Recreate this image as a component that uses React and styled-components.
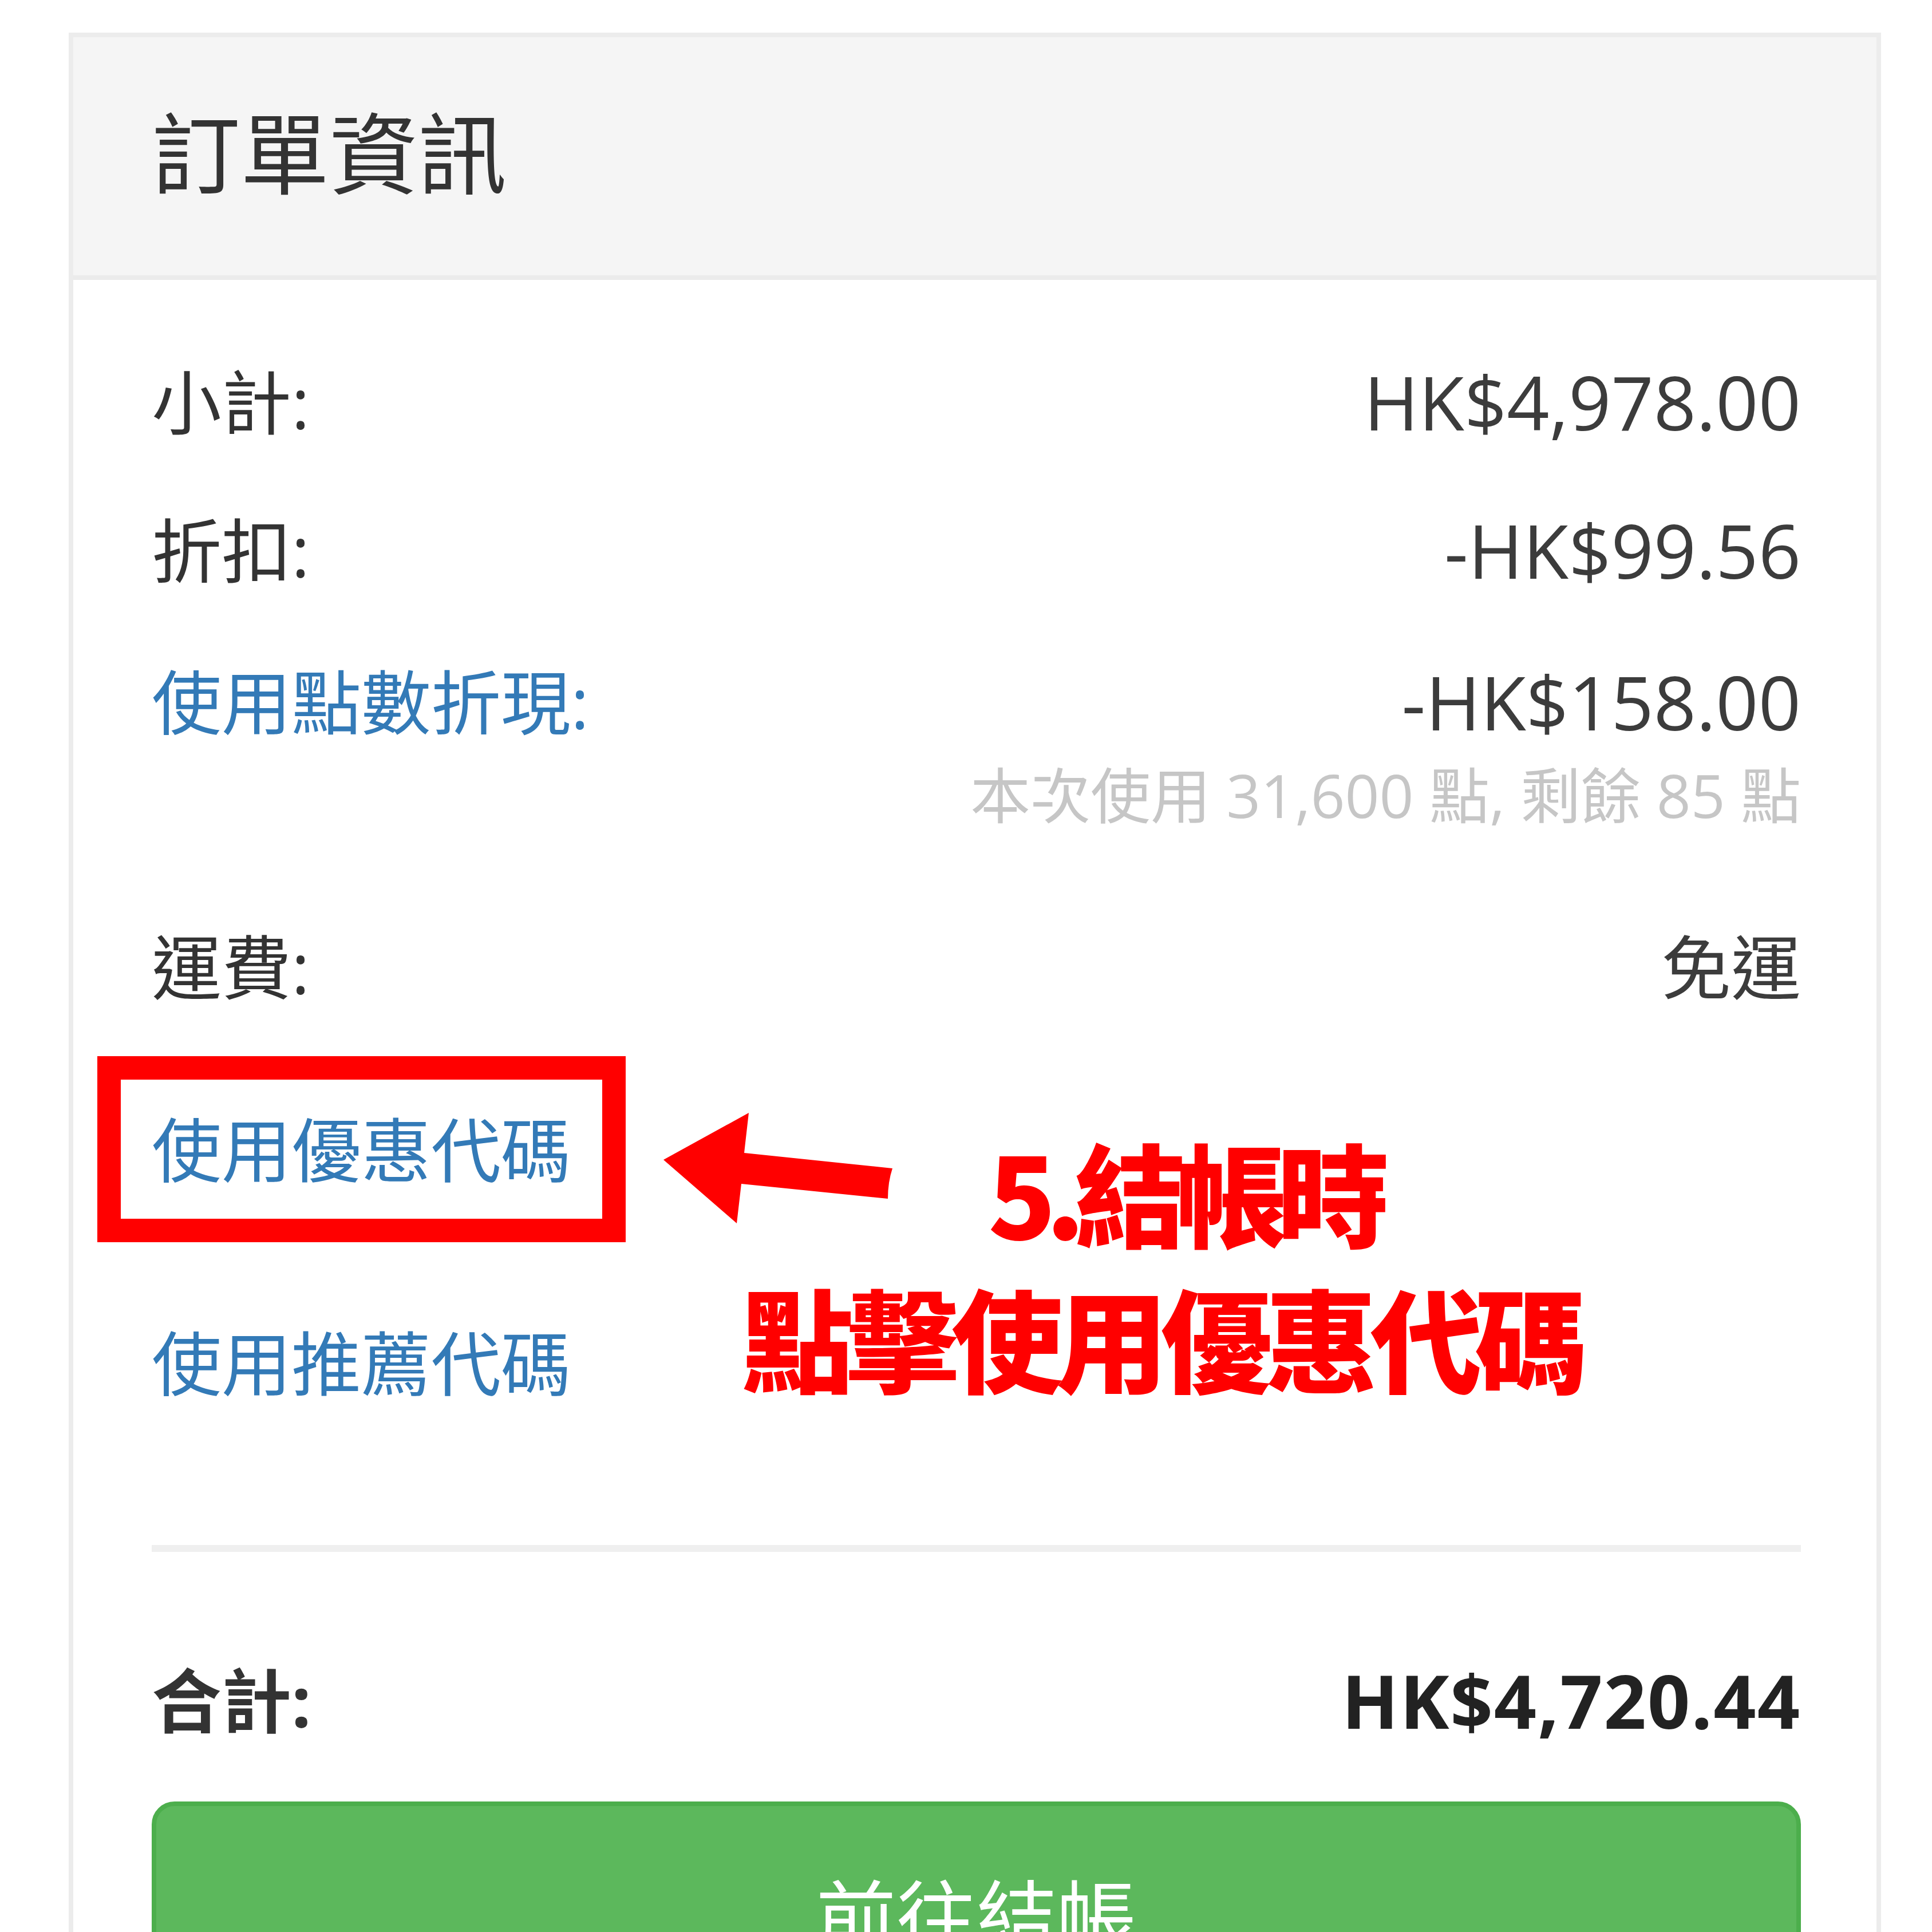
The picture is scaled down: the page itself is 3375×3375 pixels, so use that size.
import React from "react"
import styled, { createGlobalStyle } from "styled-components"

const GlobalStyle = createGlobalStyle`
  body {
    margin: 0;
    background: #fff;
  }
`

const FONT = `"Open Sans", "Noto Sans CJK TC", sans-serif`

export const Page = styled.div`
  position: relative;
  height: 3375px;
  overflow: hidden;
  padding: 57px 0 0 120px;
  box-sizing: border-box;
  font-family: ${FONT};
`

export const Card = styled.div`
  width: 3166px;
  box-sizing: border-box;
  border: 8px solid #ececec;
  border-bottom: none;
`

export const Header = styled.div`
  height: 424px;
  box-sizing: border-box;
  display: flex;
  align-items: center;
  padding: 0 0 28px 137px;
  background: #f5f5f5;
  border-bottom: 8px solid #ebebeb;
`

export const Title = styled.h3`
  margin: 0;
  font-size: 155px;
  font-weight: 400;
  color: #333;
  font-family: "Noto Sans CJK TC", sans-serif;
`

export const Body = styled.div`
  padding: 133px 132px 0 137px;
`

export const Row = styled.div`
  display: flex;
  justify-content: space-between;
  align-items: center;
  height: 160px;
  margin-top: ${p => p.$mt || 0}px;
`

export const Label = styled.span`
  position: relative;
  font-size: 122px;
  line-height: 160px;
  font-weight: ${p => (p.$bold ? 700 : 400)};
  color: ${p => (p.$link ? "#337ab7" : "#333")};
`

export const Value = styled.span`
  font-size: ${p => (p.$cjk ? 122 : 130)}px;
  line-height: 160px;
  font-weight: ${p => (p.$bold ? 700 : 400)};
  letter-spacing: ${p => (p.$bold ? 2 : 0)}px;
  color: ${p => (p.$bold ? "#222" : "#3c3c3c")};
`

export const Note = styled.div`
  margin-top: 23px;
  text-align: right;
  font-size: 105px;
  line-height: 120px;
  color: #c6c6c6;
`

// red frame drawn around the coupon link
export const CouponLink = styled(Label)`
  &::after {
    content: "";
    position: absolute;
    top: -83px;
    bottom: -82px;
    left: -95px;
    right: -96px;
    border: 41px solid #ff0000;
  }
`

export const Divider = styled.hr`
  margin: 238px 0 0;
  height: 12px;
  border: none;
  background: #efefef;
`

export const CheckoutButton = styled.button`
  display: block;
  width: 100%;
  margin-top: 97px;
  padding: 88px 0 120px;
  box-sizing: border-box;
  background: #5cb85c;
  border: 8px solid #4cae4c;
  border-radius: 40px;
  color: #fff;
  font-family: "Noto Sans CJK TC", sans-serif;
  font-size: 140px;
  line-height: 1.4;
  text-align: center;
`

export const Arrow = styled.svg`
  position: absolute;
  left: 1150px;
  top: 1935px;
`

export const Callout = styled.div`
  position: absolute;
  left: ${p => p.$x}px;
  top: ${p => p.$y}px;
  font-family: "Noto Sans CJK TC", sans-serif;
  font-weight: 900;
  font-size: 195px;
  line-height: 1;
  letter-spacing: ${p => p.$ls}px;
  color: #ff0000;
  white-space: nowrap;
`

const App = () => {
  return (
    <>
      <GlobalStyle />
      <Page>
        <Card>
          <Header>
            <Title>訂單資訊</Title>
          </Header>
          <Body>
            <Row>
              <Label>小計:</Label>
              <Value>HK$4,978.00</Value>
            </Row>
            <Row $mt={99}>
              <Label>折扣:</Label>
              <Value>-HK$99.56</Value>
            </Row>
            <Row $mt={105}>
              <Label $link>使用點數折現:</Label>
              <Value>-HK$158.00</Value>
            </Row>
            <Note>本次使用 31,600 點, 剩餘 85 點</Note>
            <Row $mt={160}>
              <Label>運費:</Label>
              <Value $cjk>免運</Value>
            </Row>
            <Row $mt={159}>
              <CouponLink $link>使用優惠代碼</CouponLink>
            </Row>
            <Row $mt={213}>
              <Label $link>使用推薦代碼</Label>
            </Row>
            <Divider />
            <Row $mt={179}>
              <Label $bold>合計:</Label>
              <Value $bold>HK$4,720.44</Value>
            </Row>
            <CheckoutButton>前往結帳</CheckoutButton>
          </Body>
        </Card>

        <Arrow width="420" height="210" viewBox="0 0 420 210">
          <path
            d="M9 91 L158 9 L150 79 L409 106 Q401 130 401 159 L145 133 L137 202 Z"
            fill="#ff0000"
          />
        </Arrow>
        <Callout $x={1726} $y={1983} $ls={-18}>5.結帳時</Callout>
        <Callout $x={1296} $y={2237} $ls={-12}>點擊使用優惠代碼</Callout>
      </Page>
    </>
  )
}

export default App
